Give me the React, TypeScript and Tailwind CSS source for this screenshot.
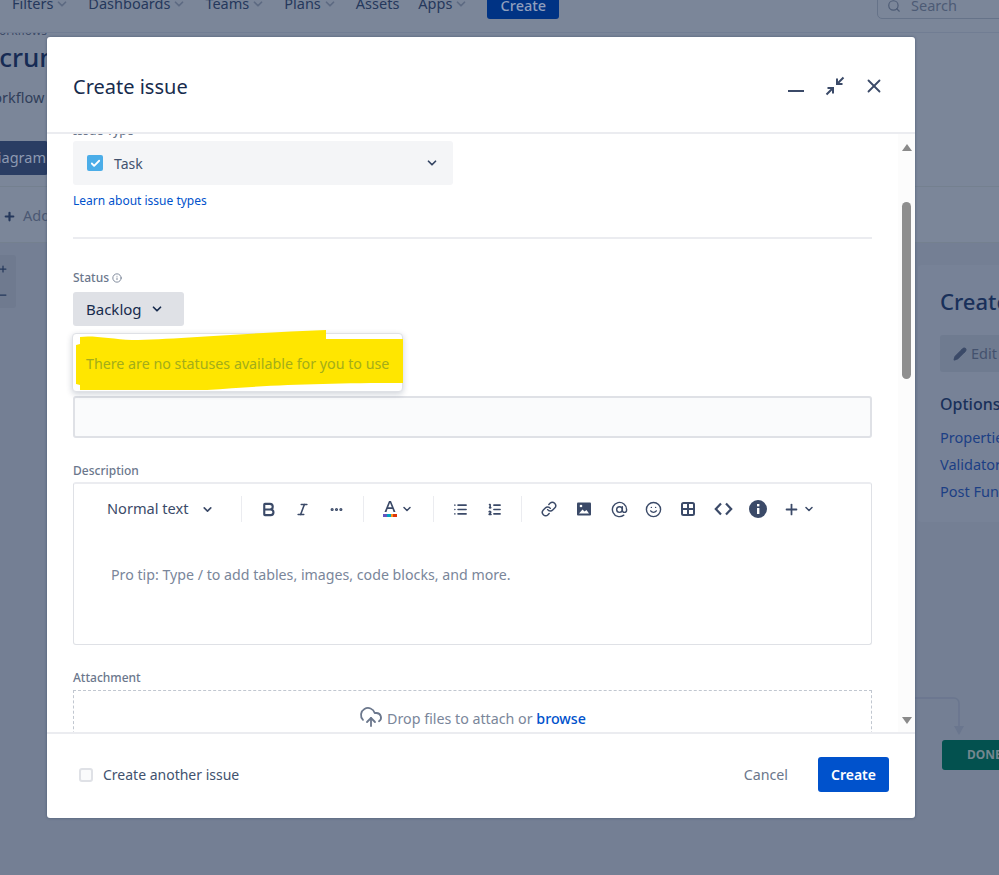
import { ChevronDown, Search, X, Minus, Bold, Italic, MoreHorizontal, List, ListOrdered, Link, AtSign, Smile, Info, Plus, Pencil, Check, CloudUpload } from 'lucide-react'

const navItems = ['Filters', 'Dashboards', 'Teams', 'Plans', 'Assets', 'Apps']

function Compress() {
  return (
    <svg width="22" height="22" viewBox="0 0 22 22" fill="none" stroke="#3b4a68" strokeWidth="2">
      <path d="M19.5 2.5 13.5 8.5M13 3.5v5.5h5.5" />
      <path d="M2.5 19.5l6-6M3.500 13H9v5.500" />
    </svg>
  )
}

function MinimizeLine() {
  return (
    <svg width="22" height="22" viewBox="0 0 22 22" stroke="#3b4a68" strokeWidth="2">
      <path d="M3 16h16" />
    </svg>
  )
}

function ColorA() {
  return (
    <svg width="16" height="20" viewBox="0 0 16 20" className="mr-[3px]">
      <path d="M2.5 13 7 2h2l4.500 11h-2L10.500 10h-5L4.500 13zM6.200 8.300h3.600L8 3.800z" fill="#3b4a68" />
      <rect x="1" y="15" width="5" height="3" fill="#6554c0" />
      <rect x="5" y="15" width="4" height="3" fill="#00a3bf" />
      <rect x="9" y="15" width="3" height="3" fill="#ff991f" />
      <rect x="11" y="15" width="4" height="3" fill="#de350b" />
    </svg>
  )
}

function PictureIcon() {
  return (
    <svg width="16" height="16" viewBox="0 0 16 16" className="ml-[19px]">
      <rect x="1" y="1.500" width="14" height="13" rx="1" fill="#3b4a68" />
      <path d="M3 12.500 6.500 8.500 8.500 10.500 10.500 9 13 12.500z" fill="#fff" />
      <circle cx="5" cy="5" r="1.300" fill="#fff" />
    </svg>
  )
}

function GridIcon() {
  return (
    <svg width="16" height="16" viewBox="0 0 16 16" fill="none" stroke="#3b4a68" strokeWidth="2" className="ml-[18px]">
      <rect x="2" y="2" width="12" height="12" rx="1.500" />
      <path d="M8 2v12M2 8h12" />
    </svg>
  )
}

function CodeIcon() {
  return (
    <svg width="19" height="16" viewBox="0 0 19 16" fill="none" stroke="#3b4a68" strokeWidth="2.200" className="ml-[18px]">
      <path d="M7 2.500 1.800 8 7 13.500M12 2.500 17.200 8 12 13.500" />
    </svg>
  )
}

function ToolbarDivider() {
  return <div className="w-px h-[26px] bg-[#ebecf0]" />
}

export default function App() {
  return (
    <div className="relative w-[999px] h-[875px] overflow-hidden bg-[#7b8699] text-[#172b4d] font-['Noto_Sans','Open_Sans',sans-serif]">
      {/* page behind the dialog */}
      <div className="relative z-10 flex items-start h-[33px] bg-[#7b8699] border-b border-[#717d93]">
        <div className="flex items-center h-[26px] -mt-[7px] pl-[12px] gap-[19px] text-[14.500px] text-[#25385c] w-full">
          {navItems.map((item) => (
            <span key={item} className="flex items-center gap-[2px] mb-[4px] last:mr-[1px]">
              {item}
              {item !== 'Assets' && <ChevronDown size={14} strokeWidth={3} className="text-[#5d6a82]" />}
            </span>
          ))}
          <span className="h-[26px] w-[72px] rounded-[3px] bg-[#003384] text-[#8f9fbd] flex items-center justify-center font-medium">Create</span>
          <span className="ml-auto h-[26px] w-[130px] -mr-[8px] border border-[#667389] rounded-[5px] flex items-center gap-[10px] pl-[9px] text-[#4d5b75]">
            <Search size={14} />
            Search
          </span>
        </div>
      </div>
      <div className="h-[153px] text-[#2a3a5c] overflow-hidden">
        <p className="text-[12px] -ml-[12px] -mt-[7px] leading-[10px] text-[#3d4b68]">Workflows</p>
        <p className="text-[26px] leading-[30px] -ml-[15px] mt-[6px] font-medium text-[#162b54]">Scrum</p>
        <p className="text-[14.500px] leading-[20px] -ml-[20px] mt-[15px] text-[#303e59]">Workflow</p>
        <div className="-ml-[22px] mt-[34px] w-[70px] h-[34px] bg-[#2a3d63] rounded-[3px] text-[#8d99b1] text-[14.500px] flex items-center justify-end pr-[2px]">iagram</div>
      </div>

      <div className="h-[57px] border-y border-[#74808f] flex items-center gap-[7px] pl-[3px] pt-[3px] text-[14.500px] text-[#4b5873]">
        <Plus size={13} strokeWidth={4} className="text-[#25385c]" />
        Add
      </div>

      <div className="flex justify-between bg-[#747f94] h-[632px]">
        <div className="mt-[12px] w-[16px] h-[53px] bg-[#6f7a8f] flex flex-col items-start justify-center gap-[16px] rounded-r-[3px] text-[#25385c]">
          <Plus size={10} strokeWidth={3} className="-ml-[2px]" />
          <Minus size={10} strokeWidth={3} className="-ml-[2px]" />
        </div>
        <div className="flex flex-col items-end">
          <div className="mt-[22px] w-[81px] h-[257px] overflow-hidden rounded-l-[3px] bg-[#778297] pl-[22px] pt-[20px]">
            <p className="text-[22px] font-medium leading-[32px] whitespace-nowrap text-[#19305a]">Create</p>
            <div className="mt-[18px] h-[37px] w-[80px] rounded-[3px] bg-[#6f7b90] flex items-center gap-[4px] pl-[13px] text-[14.500px] text-[#44526e]">
              <Pencil size={14} fill="#3b4a68" className="text-[#3b4a68] shrink-0" />
              Edit
            </div>
            <p className="mt-[20px] text-[16px] font-medium text-[#19305a] leading-[24px]">Options</p>
            <ul className="mt-[8px] text-[14.500px] text-[#1c3f85] leading-[27px] whitespace-nowrap">
              <li>Properties</li>
              <li>Validators</li>
              <li>Post Functions</li>
            </ul>
          </div>
          <div className="mt-[218px] w-[57px] h-[30px] rounded-l-[3px] bg-[#03514f] text-[#73878f] text-[12px] font-bold flex items-center pl-[25px]">DONE</div>
        </div>
      </div>

      {/* connector from the dialog edge to the DONE node */}
      <svg className="absolute left-[915px] top-[695px]" width="50" height="46" fill="none" stroke="#6a768e" strokeWidth="1.500">
        <path d="M0 3h39a5 5 0 0 1 5 5v25" />
        <path d="M39 31h10l-5 9z" fill="#6a768e" stroke="none" />
      </svg>

      {/* dialog */}
      <div className="absolute z-20 left-[47px] top-[37px] w-[868px] h-[781px] bg-white rounded-[3px] flex flex-col shadow-[0_0_3px_rgba(9,30,66,0.4)]">
        <div className="h-[97px] shrink-0 border-b-2 border-[#ebecf0] flex items-center justify-between pt-[5px] pl-[26px] pr-[30px]">
          <h1 className="text-[20px] font-normal text-[#172b4d]">Create issue</h1>
          <div className="flex items-center gap-[17px] -mt-[2px] text-[#3b4a68]">
            <MinimizeLine />
            <Compress />
            <X size={22} strokeWidth={2} />
          </div>
        </div>

        <div className="flex-1 min-h-0 flex overflow-hidden">
          <div className="flex-1 min-w-0 pl-[26px] pr-[26px] overflow-hidden">
            <p className="-mt-[11px] text-[12px] leading-[16px] font-medium text-[#6b778c]">Issue Type</p>
            <div className="mt-[2px] w-[380px] h-[44px] rounded-[3px] bg-[#f4f5f7] flex items-center pl-[14px] pr-[14px] text-[14px] text-[#42526e]">
              <span className="w-[16px] h-[16px] rounded-[2px] bg-[#4bade8] flex items-center justify-center mr-[11px]">
                <Check size={11} strokeWidth={4} className="text-white" />
              </span>
              Task
              <ChevronDown size={14} strokeWidth={3} className="ml-auto text-[#344563]" />
            </div>
            <a className="block mt-[7px] text-[12px] leading-[18px] text-[#0052cc]">Learn about issue types</a>
            <div className="mt-[27px] h-[2px] bg-[#ebecf0]" />

            <div className="mt-[31px] flex items-center gap-[3px] text-[12px] leading-[16px] font-medium text-[#6b778c]">
              Status
              <Info size={10} />
            </div>
            <div className="mt-[6px] w-[111px] h-[34px] rounded-[3px] bg-[#dfe1e6] flex items-center pl-[13px] text-[15px] text-[#172b4d]">
              Backlog
              <ChevronDown size={14} strokeWidth={3} className="ml-[8px]" />
            </div>

            {/* status popup with the yellow marker stroke over it */}
            <div className="relative mt-[7px] -ml-px w-[331px] h-[59px] rounded-[4px] bg-white border border-[#dfe1e6] shadow-[0_2px_6px_rgba(9,30,66,0.2)]">
              <svg className="absolute -left-px -top-[5px]" width="332" height="63" viewBox="0 0 332 63">
                <path d="M8 8C20 6 40 10 60 11 110 10 190 3 254 1V10H331V54C250 54 200 56 135 61L8 61 8 56 4 55V16L8 15z" fill="#ffe600" />
              </svg>
              <p className="absolute left-[13px] top-[20px] text-[14.250px] leading-[20px] whitespace-nowrap text-[#a3ad1a]">There are no statuses available for you to use</p>
            </div>

            <div className="mt-[4px] h-[42px] rounded-[3px] bg-[#fafbfc] border-2 border-[#dfe1e6]" />

            <p className="mt-[25px] text-[12px] leading-[16px] font-medium text-[#6b778c]">Description</p>
            <div className="mt-[3px] h-[163px] rounded-[3px] border border-[#dfe1e6] border-t-2 border-t-[#ebecf0]">
              <div className="flex items-center h-[50px] pl-[33px] text-[#3b4a68]">
                <span className="text-[14.600px]">Normal text</span>
                <ChevronDown size={13} strokeWidth={3} className="ml-[12px] mr-[27px]" />
                <ToolbarDivider />
                <Bold size={17} strokeWidth={3} className="ml-[18px]" />
                <Italic size={15} strokeWidth={2.500} className="ml-[18px]" />
                <MoreHorizontal size={15} strokeWidth={3} className="ml-[19px] mr-[19px]" />
                <ToolbarDivider />
                <span className="ml-[18px]"><ColorA /></span>
                <ChevronDown size={12} strokeWidth={3} />
                <span className="w-[20px]" />
                <ToolbarDivider />
                <List size={15} strokeWidth={2.500} className="ml-[19px]" />
                <ListOrdered size={15} strokeWidth={2.500} className="ml-[19px] mr-[19px]" />
                <ToolbarDivider />
                <Link size={16} strokeWidth={2.200} className="ml-[19px]" />
                <PictureIcon />
                <AtSign size={17} strokeWidth={2} className="ml-[19px]" />
                <Smile size={17} strokeWidth={2} className="ml-[17px]" />
                <GridIcon />
                <CodeIcon />
                <svg width="18" height="18" viewBox="0 0 18 18" className="ml-[16px]">
                  <circle cx="9" cy="9" r="9" fill="#3b4a68" />
                  <rect x="8" y="8" width="2.400" height="6" fill="#fff" />
                  <rect x="8" y="4" width="2.400" height="2.400" fill="#fff" />
                </svg>
                <Plus size={17} strokeWidth={2.500} className="ml-[16px]" />
                <ChevronDown size={12} strokeWidth={3} className="ml-[3px]" />
              </div>
              <p className="mt-[31px] ml-[37px] text-[14.200px] leading-[20px] text-[#7a869a]">Pro tip: Type / to add tables, images, code blocks, and more.</p>
            </div>

            <p className="mt-[25px] text-[12px] leading-[16px] font-medium text-[#6b778c]">Attachment</p>
            <div className="mt-[4px] h-[60px] border border-dashed border-[#c1c7d0] flex justify-center pt-[16px] text-[14.250px] leading-[24px] text-[#7a869a]">
              <CloudUpload size={24} strokeWidth={1.800} className="text-[#6b778c] mr-[4px] -mt-[2px]" />
              Drop files to attach or&nbsp;<span className="text-[#0052cc] font-medium">browse</span>
            </div>
          </div>

          {/* scrollbar */}
          <div className="w-[17px] shrink-0 bg-[#fcfcfc] flex flex-col items-center pt-[10px] pb-[8px]">
            <span className="w-0 h-0 border-x-[5px] border-x-transparent border-b-[7px] border-b-[#8a8a8a]" />
            <span className="mt-[51px] w-[9px] h-[177px] rounded-[5px] bg-[#8f8f8f]" />
            <span className="mt-auto w-0 h-0 border-x-[5px] border-x-transparent border-t-[7px] border-t-[#8a8a8a]" />
          </div>
        </div>

        <div className="h-[86px] shrink-0 border-t-2 border-[#ebecf0] flex items-center pb-[3px] pl-[32px] pr-[26px]">
          <span className="w-[14px] h-[14px] rounded-[3px] bg-[#fafbfc] border-2 border-[#dfe1e6] mr-[10px]" />
          <span className="text-[14px] text-[#42526e]">Create another issue</span>
          <span className="ml-auto text-[14.250px] text-[#6b778c] mr-[30px]">Cancel</span>
          <span className="w-[71px] h-[35px] rounded-[3px] bg-[#0052cc] text-white text-[14px] font-semibold flex items-center justify-center">Create</span>
        </div>
      </div>
    </div>
  )
}
